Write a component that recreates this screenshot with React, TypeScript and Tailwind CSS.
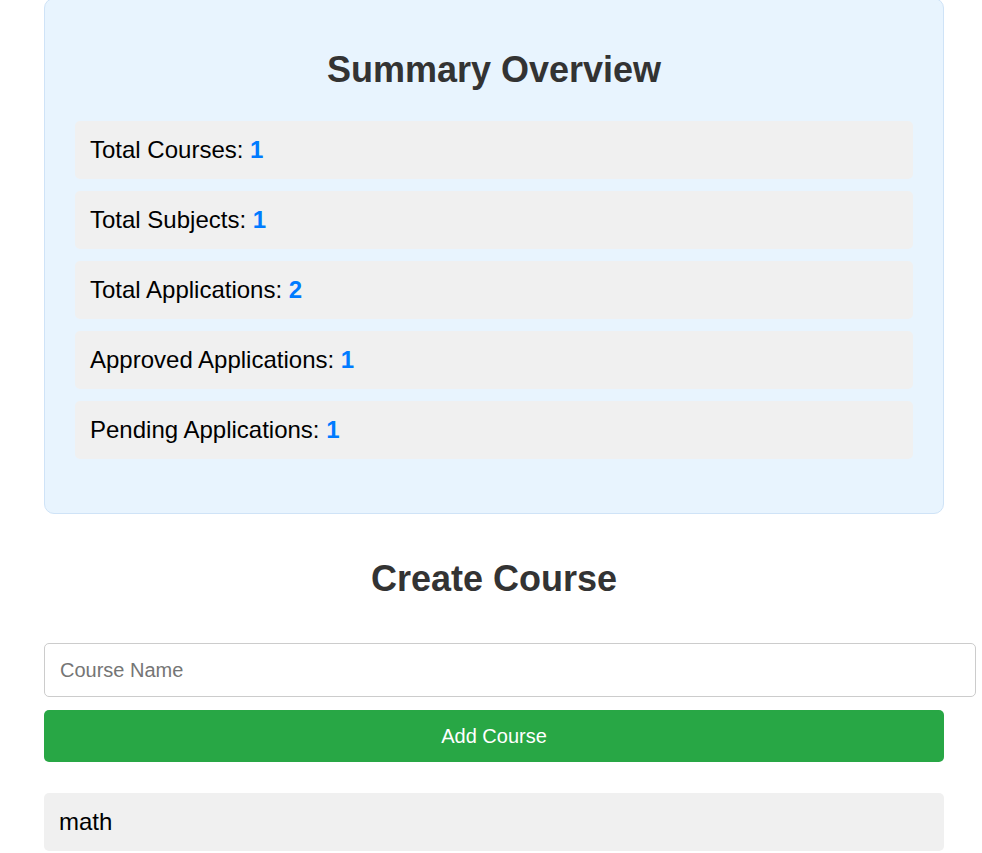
const stats = [
  { label: "Total Courses", value: 1 },
  { label: "Total Subjects", value: 1 },
  { label: "Total Applications", value: 2 },
  { label: "Approved Applications", value: 1 },
  { label: "Pending Applications", value: 1 },
];

const courses = ["math"];

export default function App() {
  return (
    <div className="min-h-[853px] overflow-hidden bg-white font-['Liberation_Sans',Arial,sans-serif]">
      <div className="ml-[44px] w-[900px]">
        <section className="-mt-[2px] rounded-[10px] border border-[#cfe3f7] bg-[#e8f4fe] px-[30px] pb-[54px] pt-[50px]">
          <h2 className="mb-[31px] text-center text-[36px] font-bold leading-[41px] text-[#333333]">
            Summary Overview
          </h2>
          <ul className="flex flex-col gap-[12px]">
            {stats.map((s) => (
              <li
                key={s.label}
                className="flex h-[58px] items-center rounded-[5px] bg-[#f0f0f0] px-[15px] text-[24px] text-black"
              >
                <span>
                  {s.label}: <strong className="font-bold text-[#007bff]">{s.value}</strong>
                </span>
              </li>
            ))}
          </ul>
        </section>

        <h2 className="mt-[44px] mb-[44px] text-center text-[36px] font-bold leading-[41px] text-[#333333]">
          Create Course
        </h2>

        <input
          className="block h-[54px] w-[932px] rounded-[5px] border border-[#cccccc] px-[15px] text-[20px] text-black outline-none placeholder:text-[#757575]"
          placeholder="Course Name"
        />
        <button className="mt-[13px] flex h-[52px] w-full items-center justify-center rounded-[5px] bg-[#28a745] text-[20px] text-white">
          Add Course
        </button>

        <ul className="mt-[31px] flex flex-col gap-[12px]">
          {courses.map((c) => (
            <li
              key={c}
              className="flex h-[58px] items-center rounded-[5px] bg-[#f0f0f0] px-[15px] text-[24px] text-black"
            >
              {c}
            </li>
          ))}
        </ul>
      </div>
    </div>
  );
}
